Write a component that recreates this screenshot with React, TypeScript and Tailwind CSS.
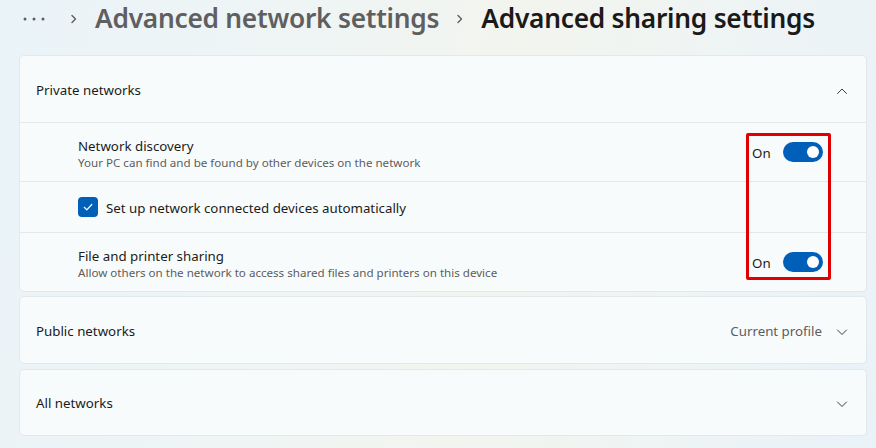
import React from "react";

const font = { fontFamily: '"Noto Sans", "Liberation Sans", sans-serif' };

function ChevronDown() {
  return (
    <svg width="12" height="12" viewBox="0 0 12 12" fill="none">
      <path d="M1.5 4 L6 8.5 L10.5 4" stroke="#3b3b3b" strokeWidth="1" strokeLinecap="round" strokeLinejoin="round" />
    </svg>
  );
}
function ChevronUp() {
  return (
    <svg width="12" height="12" viewBox="0 0 12 12" fill="none">
      <path d="M1.5 8.5 L6 4 L10.5 8.5" stroke="#3b3b3b" strokeWidth="1" strokeLinecap="round" strokeLinejoin="round" />
    </svg>
  );
}
function Crumb() {
  return (
    <svg width="10" height="14" viewBox="0 0 10 14" fill="none">
      <path d="M3 3.5 L6.5 7 L3 10.5" stroke="#5f5f5f" strokeWidth="1.4" strokeLinecap="round" strokeLinejoin="round" />
    </svg>
  );
}
function Dots() {
  return (
    <svg width="24" height="6" viewBox="0 0 24 6" fill="#5f5f5f">
      <circle cx="2" cy="3" r="1.5" />
      <circle cx="11" cy="3" r="1.5" />
      <circle cx="20" cy="3" r="1.5" />
    </svg>
  );
}
function Toggle() {
  return (
    <div className="flex items-center">
      <span className="text-[13.3px] text-[#1b1b1b] w-[31px] pt-[4px]">On</span>
      <div className="w-[40px] h-[20px] rounded-full bg-[#005fb8] flex items-center justify-end pr-[4px]">
        <div className="w-[12px] h-[12px] rounded-full bg-white" />
      </div>
    </div>
  );
}

export default function App() {
  return (
    <div
      className="w-[876px] h-[448px] overflow-hidden relative bg-[linear-gradient(100deg,#eaf3f8_0%,#eff5f4_35%,#f2f4ee_55%,#eef4f5_80%,#e9f2f8_100%)]"
      style={font}
    >
      <div className="h-[37px] flex items-center pl-[23px]">
        <Dots />
        <span className="ml-[22px]"><Crumb /></span>
        <span className="ml-[16px] text-[26.3px] font-semibold text-[#5f5f5f] tracking-[-0.25px]">Advanced network settings</span>
        <span className="ml-[16px]"><Crumb /></span>
        <span className="ml-[16px] text-[26.3px] font-semibold text-[#1a1a1a] tracking-[-0.25px]">Advanced sharing settings</span>
      </div>

      <div className="mt-[18px] ml-[19px] w-[848px] flex flex-col gap-[4px]">
        <div className="rounded-[5px] border border-[#e3e8eb] bg-[#f8fbfc]">
          <div className="h-[67px] flex items-center justify-between pl-[16px] pr-[18px] border-b border-[#e3e8eb] pt-[4px]">
            <span className="text-[13.3px] text-[#1b1b1b]">Private networks</span>
            <ChevronUp />
          </div>
          <div className="h-[59px] flex items-center justify-between pl-[58px] pr-[43px] border-b border-[#e3e8eb]">
            <div className="flex flex-col pt-[3px]">
              <span className="text-[13.3px] leading-[18px] text-[#1b1b1b]">Network discovery</span>
              <span className="text-[11.6px] leading-[16px] text-[#5d5d5d]">Your PC can find and be found by other devices on the network</span>
            </div>
            <Toggle />
          </div>
          <div className="h-[51px] flex items-center pl-[58px] border-b border-[#e3e8eb]">
            <div className="w-[20px] h-[20px] rounded-[4px] bg-[#005fb8] flex items-center justify-center">
              <svg width="12" height="12" viewBox="0 0 12 12" fill="none">
                <path d="M2.2 6.3 L4.8 8.8 L9.8 3.5" stroke="white" strokeWidth="1.2" strokeLinecap="round" strokeLinejoin="round" />
              </svg>
            </div>
            <span className="ml-[8px] text-[13.3px] text-[#1b1b1b] pt-[4px]">Set up network connected devices automatically</span>
          </div>
          <div className="h-[58px] flex items-center justify-between pl-[58px] pr-[43px]">
            <div className="flex flex-col pt-[3px]">
              <span className="text-[13.3px] leading-[18px] text-[#1b1b1b]">File and printer sharing</span>
              <span className="text-[11.6px] leading-[16px] text-[#5d5d5d]">Allow others on the network to access shared files and printers on this device</span>
            </div>
            <Toggle />
          </div>
        </div>

        <div className="h-[68px] rounded-[5px] border border-[#e3e8eb] bg-[#f8fbfc] flex items-center justify-between pl-[16px] pr-[18px] pt-[4px]">
          <span className="text-[13.3px] text-[#1b1b1b]">Public networks</span>
          <div className="flex items-center">
            <span className="text-[13.3px] text-[#5d5d5d] mr-[14px]">Current profile</span>
            <ChevronDown />
          </div>
        </div>

        <div className="h-[67px] mt-[1px] rounded-[5px] border border-[#e3e8eb] bg-[#f8fbfc] flex items-center justify-between pl-[16px] pr-[18px] pt-[2px]">
          <span className="text-[13.3px] text-[#1b1b1b]">All networks</span>
          <ChevronDown />
        </div>
      </div>

      <div className="absolute left-[746px] top-[133px] w-[85px] h-[147px] border-[3px] border-[#e00000] rounded-[2px]" />
    </div>
  );
}
